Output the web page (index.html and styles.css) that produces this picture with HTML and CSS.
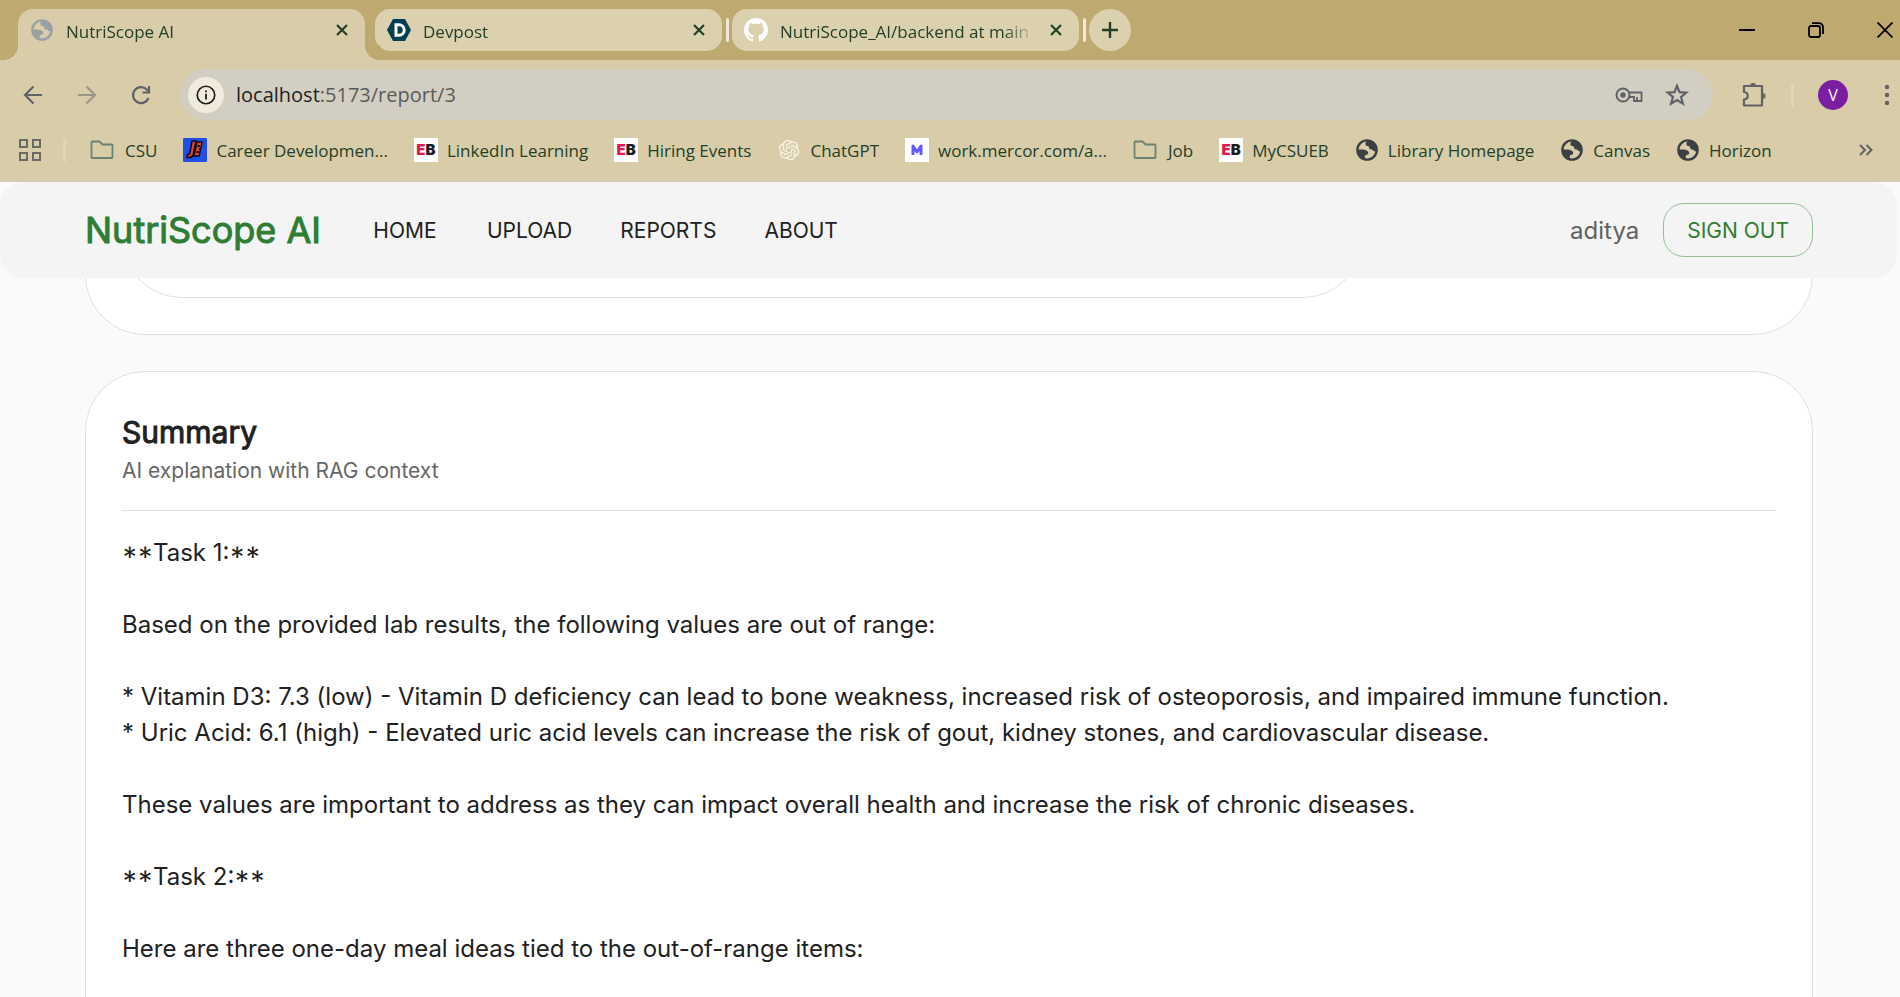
FILE: index.html
```html
<!DOCTYPE html>
<html lang="en">
<head>
<meta charset="utf-8">
<title>NutriScope AI</title>
<link rel="stylesheet" href="styles.css">
</head>
<body>
<svg class="defs" aria-hidden="true">
  <symbol id="globe" viewBox="0 0 24 24">
    <circle cx="12" cy="12" r="9.6" fill="none" stroke="currentColor" stroke-width="2.4"/>
    <path fill="currentColor" d="M12.5 2C11 3.500 10 5 10.500 6.500c.3 1 1.200 1.500 2.200 1.500 1.800 0 1 3.500 3.300 3.500 2.200 0 2 2.500 6 2 .8-6-3.500-11.500-9.500-11.500zM2 11.500c3 .2 5.500-.3 8 .5 2 .8 3.500 1.500 3.200 3.500-.2 1.500-2.500 1-3.200 2-.6.9.2 2.500-.5 4.200C5 21 1.800 17 2 11.500z"/>
  </symbol>
  <symbol id="folder" viewBox="0 0 24 24">
    <path d="M2.500 3.500h7l3 3h9.200c.5 0 .8.300.8.800v11.900c0 .5-.3.800-.8.800H2.300c-.5 0-.8-.3-.8-.8V4.500c0-.6.4-1 1-1z" fill="none" stroke="currentColor" stroke-width="1.800"/>
  </symbol>
  <symbol id="cross" viewBox="0 0 12 12">
    <path d="M1 1l10 10M11 1L1 11" fill="none" stroke="currentColor" stroke-width="2.200"/>
  </symbol>
</svg>

<div class="browser">
  <div class="tabstrip">
    <div class="tab tab-active">
      <svg class="fav fav-grey"><use href="#globe"/></svg>
      <span class="tab-title">NutriScope AI</span>
      <button class="tab-close" aria-label="Close NutriScope AI"><svg><use href="#cross"/></svg></button>
    </div>
    <div class="tab">
      <svg class="fav" viewBox="0 0 24 24"><path d="M6 1h12l6 11-6 11H6L0 12z" fill="#003e54"/><path d="M9 6.800h3a5.200 5.200 0 0 1 0 10.400H9z" fill="none" stroke="#fff" stroke-width="3"/></svg>
      <span class="tab-title">Devpost</span>
      <button class="tab-close" aria-label="Close Devpost"><svg><use href="#cross"/></svg></button>
    </div>
    <span class="tab-sep"></span>
    <div class="tab">
      <svg class="fav" viewBox="0 0 16 16"><path fill="#fff" d="M8 0C3.580 0 0 3.580 0 8c0 3.540 2.290 6.530 5.470 7.590.4.070.55-.17.55-.38 0-.19-.01-.82-.01-1.490-2.010.37-2.530-.49-2.690-.94-.09-.23-.48-.94-.82-1.130-.28-.15-.68-.52-.01-.53.63-.01 1.080.58 1.230.82.72 1.210 1.870.87 2.330.66.070-.52.28-.87.51-1.070-1.780-.2-3.640-.89-3.640-3.950 0-.87.31-1.590.82-2.150-.08-.2-.36-1.020.08-2.120 0 0 .67-.21 2.200.82.64-.18 1.320-.27 2-.27s1.360.09 2 .27c1.530-1.040 2.200-.82 2.200-.82.44 1.100.16 1.920.08 2.120.51.56.82 1.270.82 2.150 0 3.070-1.870 3.750-3.650 3.950.29.25.54.73.54 1.480 0 1.070-.01 1.930-.01 2.200 0 .21.15.46.55.38A8.010 8.010 0 0 0 16 8c0-4.420-3.580-8-8-8z"/></svg>
      <span class="tab-title">NutriScope_AI/backend at main</span>
      <button class="tab-close" aria-label="Close NutriScope_AI"><svg><use href="#cross"/></svg></button>
    </div>
    <span class="tab-sep"></span>
    <button class="tab-new" aria-label="New tab"><svg viewBox="0 0 16 16"><path d="M8 0v16M0 8h16" fill="none" stroke="currentColor" stroke-width="2.400"/></svg></button>
    <div class="window-controls">
      <button aria-label="Minimize"><svg viewBox="0 0 16 16"><path d="M0 8h16" stroke="#000" stroke-width="2"/></svg></button>
      <button aria-label="Restore"><svg viewBox="0 0 16 16"><rect x="1" y="4" width="11" height="11" rx="2" fill="none" stroke="#000" stroke-width="1.800"/><path d="M4 1.200h7a4 4 0 0 1 4 4V12" fill="none" stroke="#000" stroke-width="1.800"/></svg></button>
      <button aria-label="Close"><svg viewBox="0 0 16 16"><path d="M.5.5l15 15M15.500.5l-15 15" stroke="#000" stroke-width="1.800"/></svg></button>
    </div>
  </div>

  <div class="toolbar">
    <div class="nav-buttons">
      <button aria-label="Back"><svg viewBox="0 0 24 24"><path d="M21 12H4M12.500 3.500L4 12l8.500 8.500" fill="none" stroke="currentColor" stroke-width="2.200"/></svg></button>
      <button class="dim" aria-label="Forward"><svg viewBox="0 0 24 24"><path d="M3 12h17M11.500 3.500L20 12l-8.500 8.500" fill="none" stroke="currentColor" stroke-width="2.200"/></svg></button>
      <button aria-label="Reload"><svg viewBox="0 0 24 24"><path d="M19.500 15A8 8 0 1 1 17.800 6.500L20 9" fill="none" stroke="currentColor" stroke-width="2.200"/><path d="M20 3v6.500h-6.500" fill="none" stroke="currentColor" stroke-width="2.200"/></svg></button>
    </div>
    <div class="omnibox">
      <button class="site-info" aria-label="Site information"><svg viewBox="0 0 24 24"><circle cx="12" cy="12" r="10.500" fill="none" stroke="#1f1f1f" stroke-width="2"/><path d="M12 10.500v7M12 6.500v2.200" stroke="#1f1f1f" stroke-width="2.200"/></svg></button>
      <div class="url" role="textbox" aria-label="Address" contenteditable="true" spellcheck="false"><b>localhost</b>:5173/report/3</div>
      <div class="omni-actions">
        <svg class="key" viewBox="0 0 28 18"><circle cx="8" cy="9" r="6.500" fill="none" stroke="currentColor" stroke-width="2"/><circle cx="8" cy="9" r="2.700" fill="currentColor"/><path d="M14 6.500h12.500V15h-4.500v-4M22 15h-3v-4h-5" fill="none" stroke="currentColor" stroke-width="1.800"/></svg>
        <svg class="ico" viewBox="0 0 24 24"><path d="M12 2.800l2.500 6.400 6.900.4-5.300 4.400 1.800 6.700-5.900-3.700-5.900 3.700 1.800-6.700L2.600 9.600l6.900-.4z" fill="none" stroke="currentColor" stroke-width="2.200"/></svg>
      </div>
    </div>
    <div class="tool-actions">
      <svg class="ext" viewBox="0 0 26 26"><path d="M3 4h18v19.500H3v-6c5-.5 5-7 0-7.500z" fill="none" stroke="currentColor" stroke-width="2.200" stroke-linejoin="round"/><path d="M9 4a3 3 0 0 1 6 0zM21.500 11a3 3 0 0 1 0 6z" fill="currentColor"/></svg>
      <span class="divider"></span>
      <button class="avatar" aria-label="Profile">V</button>
      <svg class="dots" viewBox="0 0 6 24"><circle cx="3" cy="4" r="2.200"/><circle cx="3" cy="12" r="2.200"/><circle cx="3" cy="20" r="2.200"/></svg>
    </div>
  </div>

  <nav class="bookmarks" aria-label="Bookmarks">
    <svg class="apps" viewBox="0 0 22 22"><path d="M1 1h7v7H1zM14 1h7v7h-7zM1 14h7v7H1zM14 14h7v7h-7z" fill="none" stroke="currentColor" stroke-width="2"/></svg>
    <span class="divider"></span>
    <div class="marks">
      <a href="#"><svg class="fold"><use href="#folder"/></svg>CSU</a>
      <a href="#"><svg viewBox="0 0 24 24"><rect width="24" height="24" rx="1" fill="#1f4fe8"/><path d="M9 3h4l-3 14c-.5 2-2 3-6 2.500l.5-3c1.500 0 2 0 2.300-1z M14 4h5l-1 6-1.500 1 1 1-1.500 6h-5z" fill="#f0421c" stroke="#0a0a20" stroke-width="1.500"/><path d="M14.500 8h2.500M13.500 14h2.500" stroke="#0a0a20" stroke-width="2"/></svg>Career Developmen...</a>
      <a href="#"><span class="eb"><i>E</i>B</span>LinkedIn Learning</a>
      <a href="#"><span class="eb"><i>E</i>B</span>Hiring Events</a>
      <a href="#"><svg viewBox="-2 -2 28 28"><path fill="#f8f4e8" d="M22.2819 9.8211a5.9847 5.9847 0 0 0-.5157-4.9108 6.0462 6.0462 0 0 0-6.5098-2.9A6.0651 6.0651 0 0 0 4.9807 4.1818a5.9847 5.9847 0 0 0-3.9977 2.9 6.0462 6.0462 0 0 0 .7427 7.0966 5.98 5.98 0 0 0 .511 4.9107 6.051 6.051 0 0 0 6.5146 2.9001A5.9847 5.9847 0 0 0 13.2599 24a6.0557 6.0557 0 0 0 5.7718-4.2058 5.9894 5.9894 0 0 0 3.9977-2.9001 6.0557 6.0557 0 0 0-.7475-7.0729zm-9.022 12.6081a4.4755 4.4755 0 0 1-2.8764-1.0408l.1419-.0804 4.7783-2.7582a.7948.7948 0 0 0 .3927-.6813v-6.7369l2.02 1.1686a.071.071 0 0 1 .038.052v5.5826a4.504 4.504 0 0 1-4.4945 4.4944zm-9.6607-4.1254a4.4708 4.4708 0 0 1-.5346-3.0137l.142.0852 4.783 2.7582a.7712.7712 0 0 0 .7806 0l5.8428-3.3685v2.3324a.0804.0804 0 0 1-.0332.0615L9.74 19.9502a4.4992 4.4992 0 0 1-6.1408-1.6464zM2.3408 7.8956a4.485 4.485 0 0 1 2.3655-1.9728V11.6a.7664.7664 0 0 0 .3879.6765l5.8144 3.3543-2.0201 1.1685a.0757.0757 0 0 1-.071 0l-4.8303-2.7865A4.504 4.504 0 0 1 2.3408 7.872zm16.5963 3.8558L13.1038 8.364 15.1192 7.2a.0757.0757 0 0 1 .071 0l4.8303 2.7913a4.4944 4.4944 0 0 1-.6765 8.1042v-5.6772a.79.79 0 0 0-.407-.667zm2.0107-3.0231l-.142-.0852-4.7735-2.7818a.7759.7759 0 0 0-.7854 0L9.409 9.2297V6.8974a.0662.0662 0 0 1 .0284-.0615l4.8303-2.7866a4.4992 4.4992 0 0 1 6.6802 4.66zM8.3065 12.863l-2.02-1.1638a.0804.0804 0 0 1-.038-.0567V6.0742a4.4992 4.4992 0 0 1 7.3757-3.4537l-.142.0805L8.704 5.459a.7948.7948 0 0 0-.3927.6813zm1.0976-2.3654l2.602-1.4998 2.6069 1.4998v2.9994l-2.5974 1.4997-2.6067-1.4997Z"/></svg>ChatGPT</a>
      <a href="#"><svg viewBox="0 0 24 24"><rect width="24" height="24" fill="#fff"/><path d="M8 17V8l4 6 4-6v9" fill="none" stroke="#635bff" stroke-width="3" stroke-linejoin="round"/></svg>work.mercor.com/a...</a>
      <a href="#"><svg class="fold"><use href="#folder"/></svg>Job</a>
      <a href="#"><span class="eb"><i>E</i>B</span>MyCSUEB</a>
      <a href="#"><svg class="dark"><use href="#globe"/></svg>Library Homepage</a>
      <a href="#"><svg class="dark"><use href="#globe"/></svg>Canvas</a>
      <a href="#"><svg class="dark"><use href="#globe"/></svg>Horizon</a>
    </div>
    <button class="more" aria-label="More bookmarks"><svg viewBox="0 0 14 12"><path d="M1 1l5 5-5 5M7.500 1l5 5-5 5" fill="none" stroke="currentColor" stroke-width="2"/></svg></button>
  </nav>
</div>

<div class="page">
  <header class="appbar">
    <a class="brand" href="#">NutriScope AI</a>
    <nav class="menu" aria-label="Main">
      <a href="#">HOME</a><a href="#">UPLOAD</a><a href="#">REPORTS</a><a href="#">ABOUT</a>
    </nav>
    <span class="user">aditya</span>
    <button class="signout">SIGN OUT</button>
  </header>
  <main class="content">
    <section class="card"><div class="inner-card"></div></section>
    <section class="card card-summary">
      <h2>Summary</h2>
      <p class="subtitle">AI explanation with RAG context</p>
      <hr>
      <div class="explanation"><span class="mark">**</span>Task 1:<span class="mark">**</span>

Based on the provided lab results, the following values are out of range:

* Vitamin D3: 7.3 (low) - Vitamin D deficiency can lead to bone weakness, increased risk of osteoporosis, and impaired immune function.
* Uric Acid: 6.1 (high) - Elevated uric acid levels can increase the risk of gout, kidney stones, and cardiovascular disease.

These values are important to address as they can impact overall health and increase the risk of chronic diseases.

<span class="mark">**</span>Task 2:<span class="mark">**</span>

Here are three one-day meal ideas tied to the out-of-range items:</div>
    </section>
  </main>
</div>
</body>
</html>
```

FILE: styles.css
```css
* { box-sizing: border-box; }
body {
  margin: 0;
  height: 100vh;
  overflow: hidden;
  display: flex;
  flex-direction: column;
  background: #fafafa;
  font-family: Inter, sans-serif;
}
button { border: 0; padding: 0; margin: 0; background: none; color: inherit; font: inherit; display: flex; align-items: center; justify-content: center; }
a { color: inherit; text-decoration: none; }
.defs { position: absolute; width: 0; height: 0; }

/* Browser frame */
.browser { flex: none; font-family: "Open Sans", sans-serif; background: #d9cca8; color: #233f28; border-bottom: 2px solid #d3cbb8; }
.tabstrip { display: flex; align-items: center; height: 60px; padding-left: 18px; background: #bea970; font-size: 17px; }
.tab { display: flex; align-items: center; width: 347px; height: 42px; padding: 0 17px 0 12px; border-radius: 15px; background: #dcd1af; }
.tab-active { position: relative; align-self: flex-end; height: 51px; margin-right: 10px; padding-bottom: 9px; border-radius: 15px 15px 0 0; background: #d9cca8; }
.tab-active::before, .tab-active::after { content: ""; position: absolute; bottom: 0; width: 15px; height: 15px; }
.tab-active::before { right: 100%; background: radial-gradient(circle at 0 0, #bea970 15px, #d9cca8 15px); }
.tab-active::after { left: 100%; background: radial-gradient(circle at 100% 0, #bea970 15px, #d9cca8 15px); }
.fav { flex: none; width: 24px; height: 24px; margin-right: 12px; }
.fav-grey { color: #9aa0a6; }
.tab-title { flex: 1; overflow: hidden; white-space: nowrap; padding-top: 2px; margin-right: 16px; mask-image: linear-gradient(to right, #000 calc(100% - 30px), transparent); }
.tab-close, .tab-close svg { width: 12px; height: 12px; }
.tab-sep { width: 3px; height: 24px; margin: 0 3px 0 4px; border-radius: 2px; background: #efe9d8; }
.tab-new { width: 42px; height: 42px; border-radius: 50%; background: #dcd1af; }
.tab-new svg { width: 16px; height: 16px; }
.window-controls { display: flex; gap: 53px; margin-left: auto; padding-right: 7px; }
.window-controls svg { width: 16px; height: 16px; }

.toolbar { display: flex; align-items: center; height: 60px; padding: 9px 10px 0 21px; color: #5f6368; }
.nav-buttons { display: flex; gap: 30px; margin-right: 27px; }
.nav-buttons svg, .ico { display: block; width: 24px; height: 24px; }
.nav-buttons .dim { opacity: .5; }
.omnibox { flex: 1; display: flex; align-items: center; height: 51px; padding: 0 24px 0 8px; border-radius: 26px; background: #d3cec2; }
.site-info { width: 36px; height: 36px; border-radius: 50%; background: #f1ebdd; }
.site-info svg { width: 20px; height: 20px; }
.url { margin-left: 12px; font-size: 20px; color: #5a5a5a; }
.url b { font-weight: 400; color: #1f1f1f; }
.omni-actions { display: flex; align-items: center; gap: 22px; margin-left: auto; }
.key { width: 28px; height: 18px; }
.tool-actions { display: flex; align-items: center; }
.ext { width: 26px; height: 26px; margin: 0 24px 0 28px; }
.divider { width: 3px; height: 24px; border-radius: 2px; background: #e0d6b8; }
.avatar { width: 30px; height: 30px; margin: 0 36px 0 24px; border-radius: 50%; background: #7b1fa2; color: #fff; font-size: 16px; }
.dots { width: 6px; height: 24px; fill: #5f6368; }

.bookmarks { display: flex; align-items: center; height: 60px; padding: 0 27px 0 19px; font-size: 17px; }
.apps { width: 22px; height: 22px; color: #6b6b66; margin-right: 22px; }
.marks { display: flex; align-items: center; gap: 26px; margin-left: 24px; white-space: nowrap; }
.marks a { display: flex; align-items: center; gap: 9px; }
.marks svg, .eb { flex: none; width: 24px; height: 24px; }
.marks .fold { color: #6b8272; margin-right: 2px; }
.dark { color: #3c4043; }
.eb { display: flex; align-items: center; justify-content: center; background: #fff; color: #1c1c1c; font: 900 15px/24px Inter, sans-serif; }
.eb i { font-style: normal; color: #e6174f; }
.more { margin-left: auto; color: #5f6368; }
.more svg { width: 14px; height: 12px; }

/* Application */
.page { flex: 1; min-height: 0; overflow: hidden; padding-right: 3px; }
.appbar { position: relative; z-index: 1; display: flex; align-items: center; height: 96px; padding: 0 84px 0 85px; border-radius: 24px; background: #f4f4f4; color: #212121; }
.brand { font-size: 36px; font-weight: 400; color: #2e7d32; -webkit-text-stroke: 1px currentColor; }
.menu { display: flex; gap: 48px; margin-left: 50px; font-size: 21px; }
.menu a { min-width: 68px; text-align: center; }
.user { margin-left: auto; font-size: 24px; color: #616161; }
.signout { height: 54px; margin-left: 24px; padding: 0 23px; border: 1px solid #93bf96; border-radius: 21px; font-size: 21px; color: #2e7d32; }
.content { display: flex; flex-direction: column; gap: 36px; margin-top: -97px; padding: 0 84px 0 85px; }
.card { border: 1px solid #e0e0e0; border-radius: 60px; background: #fff; padding: 36px; }
.card-summary { padding-bottom: 144px; }
.inner-card { width: 75%; height: 80px; border: 1px solid #e0e0e0; border-radius: 0 0 60px 60px; }
h2 { margin: 0; font-size: 30px; line-height: 48px; font-weight: 400; color: #212121; -webkit-text-stroke: 1px currentColor; }
.subtitle { margin: 0; font-size: 21px; line-height: 30px; color: #666; }
hr { height: 1px; margin: 24px 0; border: 0; background: #e0e0e0; }
.explanation { font-size: 24px; line-height: 36px; white-space: pre-wrap; color: #212121; }
.mark { font-feature-settings: "case" 1; }
```
